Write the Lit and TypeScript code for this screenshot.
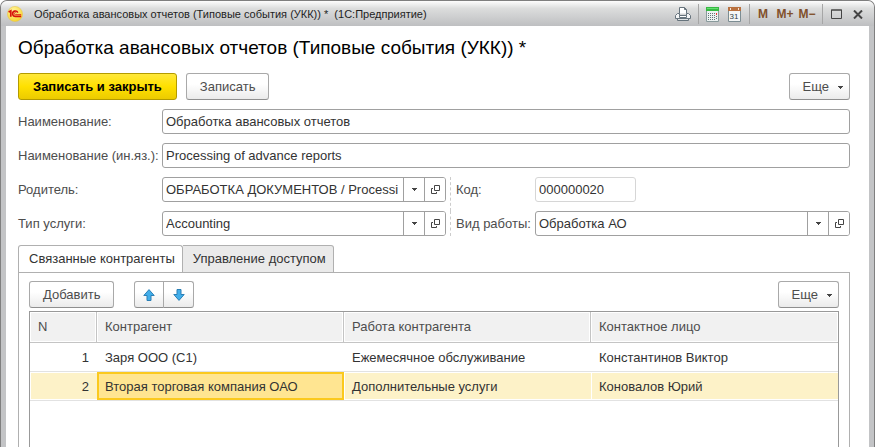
import { LitElement, html, svg, css } from "lit";
import { customElement, property, state } from "lit/decorators.js";
import { classMap } from "lit/directives/class-map.js";

const controls = css`
  * {
    box-sizing: border-box;
  }
  button,
  input {
    font: inherit;
    color: inherit;
    margin: 0;
  }
  .btn {
    display: inline-flex;
    align-items: center;
    justify-content: center;
    height: 27px;
    padding: 0 13px;
    border: 1px solid #a9a9a9;
    border-bottom-color: #8f8f8f;
    border-radius: 3px;
    background: linear-gradient(#ffffff 40%, #ebebeb);
    color: #4d4d4d;
    white-space: nowrap;
  }
`;

@customElement("choice-field")
class ChoiceField extends LitElement {
  @property() label = "";
  @property() value = "";

  static styles = [
    controls,
    css`
      :host {
        display: block;
        min-width: 0;
      }
      .box {
        display: flex;
        height: 25px;
        border: 1px solid #a0a0a0;
        border-radius: 3px;
        background: #fff;
        overflow: hidden;
      }
      .text {
        flex: 1;
        min-width: 0;
        padding: 0;
        margin: 0 2px 0 3px;
        border: 0;
        outline: 0;
        background: none;
        color: #333;
      }
      .pick {
        display: flex;
        align-items: center;
        justify-content: center;
        width: 21px;
        padding: 0;
        border: 0;
        border-left: 1px solid #a0a0a0;
        background: #fff;
      }
    `,
  ];

  render() {
    return html`<div class="box">
      <input class="text" aria-label=${this.label} .value=${this.value} />
      <button class="pick" aria-label="Выбрать из списка">
        <svg width="5" height="3" viewBox="0 0 5 3"><path d="M0 0h5v1H4v1H3v1H2V2H1V1H0z" fill="#444" /></svg>
      </button>
      <button class="pick" aria-label="Открыть">
        <svg width="9" height="9" viewBox="0 0 9 9" fill="none" stroke="#444">
          <path d="M3.5 .5h5v5h-5zM2 3.5H.5v5h5V7" />
        </svg>
      </button>
    </div>`;
  }
}

interface Row {
  n: number;
  party: string;
  work: string;
  contact: string;
}

const rows: Row[] = [
  { n: 1, party: "Заря ООО (С1)", work: "Ежемесячное обслуживание", contact: "Константинов Виктор" },
  { n: 2, party: "Вторая торговая компания ОАО", work: "Дополнительные услуги", contact: "Коновалов Юрий" },
];

const caret = svg`<svg class="caret" width="5" height="3" viewBox="0 0 5 3"><path d="M0 0h5v1H4v1H3v1H2V2H1V1H0z" fill="#444" /></svg>`;

const moveArrow = (down: boolean) => html`<svg width="12" height="12" viewBox="0 0 12 12">
  <path
    d=${down ? "M4 .5h4v5h3.2L6 11.4.8 5.5H4z" : "M4 11.5h4v-5h3.2L6 .6.8 6.5H4z"}
    fill="#42aeea"
    stroke="#2b7fb5"
    stroke-linejoin="round"
  />
</svg>`;

@customElement("app-root")
class AppRoot extends LitElement {
  @state() private tab = 0;
  @state() private selected = 2;

  static styles = [
    controls,
    css`
      :host {
        display: block;
        font: 13px/16px "Liberation Sans", Arial, sans-serif;
        color: #333;
      }
      .window {
        display: flex;
        flex-direction: column;
        min-height: 100vh;
        padding: 0 5px;
        border: 1px solid #7f7f7f;
        border-bottom: 0;
        border-radius: 7px 7px 0 0;
        background: #c3c4c6;
      }
      .titlebar {
        display: flex;
        align-items: center;
        height: 25px;
        margin: 0 -5px;
        padding: 1px 1px 0 6px;
        border-radius: 6px 6px 0 0;
        background: linear-gradient(#fdfdfd, #dcdddd 30%, #bebfc1);
        font-size: 11px;
        color: #1e1e1e;
      }
      .logo {
        flex: none;
        margin-right: 11px;
      }
      .caption {
        flex: 1;
        min-width: 0;
        overflow: hidden;
        white-space: pre;
      }
      .tools {
        display: flex;
        align-items: center;
        height: 20px;
      }
      .tool {
        display: flex;
        align-items: center;
        justify-content: center;
        width: 22px;
        height: 20px;
        padding: 0;
        border: 0;
        background: none;
        font-weight: bold;
        font-size: 12px;
        color: #81502b;
      }
      .day {
        font-weight: normal;
        font-size: 8px;
      }
      .group {
        display: flex;
        padding: 0 4px 0 2px;
        border-left: 1px solid #a6a6a6;
      }
      .group:first-child {
        border-left: 0;
      }
      .form {
        display: flex;
        flex-direction: column;
        flex: 1;
        padding: 12px 19px 0 12px;
        background: #fff;
      }
      .title {
        margin: 0;
        font-size: 19px;
        line-height: 20px;
        font-weight: normal;
        color: #000;
      }
      .commands {
        display: flex;
        gap: 9px;
        margin: 15px 0 9px;
      }
      .primary {
        padding: 0 14px;
        border-color: #b39b00;
        background: linear-gradient(#ffe83a, #ffe000 50%, #eccb00);
        font-weight: bold;
        color: #000;
      }
      .more {
        margin-left: auto;
        padding: 0 6px 0 13px;
      }
      .caret {
        margin: 2px 0 0 9px;
      }
      .fields {
        display: grid;
        grid-template-columns: 144px minmax(0, 284fr) 89px minmax(0, 315fr);
        row-gap: 9px;
        align-items: center;
      }
      .label {
        color: #4d4d4d;
        white-space: nowrap;
      }
      .side {
        align-self: stretch;
        display: flex;
        align-items: center;
        margin: 0 0 -9px 4px;
        padding: 0 0 9px 5px;
        border-left: 1px dashed #ccc;
      }
      .last {
        margin-bottom: 0;
        padding-bottom: 0;
      }
      .input {
        width: 100%;
        height: 25px;
        padding: 0 3px;
        border: 1px solid #a0a0a0;
        border-radius: 3px;
        background: #fff;
        color: #333;
      }
      .wide {
        grid-column: 2 / -1;
      }
      .code {
        width: 101px;
        border-color: #d6d6d6;
      }
      .tabs {
        display: flex;
        margin: 9px 0 -1px;
      }
      .tab {
        height: 28px;
        padding: 0 7px 0 10px;
        border: 1px solid #b0b0b0;
        border-left-width: 0;
        border-radius: 0 3px 0 0;
        background: #eaeaea;
        color: #333;
      }
      .tab:first-child {
        border-left-width: 1px;
        border-radius: 3px 3px 0 0;
      }
      .active {
        border-bottom-color: #fff;
        background: #fff;
      }
      .panel {
        display: flex;
        flex-direction: column;
        flex: 1;
        padding: 8px 10px 0;
        border: 1px solid #b0b0b0;
        border-bottom: 0;
      }
      .bar {
        display: flex;
        margin-bottom: 3px;
      }
      .movers {
        display: flex;
        margin-left: 20px;
      }
      .mover {
        width: 30px;
        padding: 0;
      }
      .mover:first-child {
        border-radius: 3px 0 0 3px;
      }
      .mover:last-child {
        width: 31px;
        margin-left: -1px;
        border-radius: 0 3px 3px 0;
      }
      .grid {
        flex: 1;
        border: 1px solid #999;
        border-bottom: 0;
      }
      .table {
        width: 100%;
        table-layout: fixed;
        border-collapse: separate;
        border-spacing: 0;
      }
      .number {
        width: 67px;
      }
      .head,
      .cell {
        padding: 0 8px;
        text-align: left;
        font-weight: normal;
        white-space: nowrap;
        overflow: hidden;
      }
      .head {
        height: 31px;
        border-bottom: 1px solid #c4c4c4;
        border-right: 1px solid #c4c4c4;
        background: #f1f1f1;
        box-shadow: inset 0 0 0 1px #fff;
        color: #4d4d4d;
      }
      .head:last-child {
        border-right: 0;
      }
      .cell {
        height: 29px;
        padding-top: 2px;
        border-bottom: 1px solid #e2e2e2;
      }
      .index {
        text-align: right;
      }
      .chosen .cell {
        background: #fdf2c8;
        box-shadow: inset 0 1px #fff, inset 0 -1px #fff, inset 1px 0 #fff;
      }
      .chosen .focus {
        background: #ffe591;
        box-shadow: inset 0 0 0 2px #fbc91e;
      }
    `,
  ];

  private titleBar() {
    return html`<header class="titlebar">
      <svg class="logo" width="16" height="16" viewBox="0 0 16 16">
        <defs>
          <radialGradient id="sun" cx=".4" cy=".3" r=".8">
            <stop offset="0" stop-color="#fff6a0" />
            <stop offset="1" stop-color="#f7cf22" />
          </radialGradient>
        </defs>
        <circle cx="8" cy="8" r="7.6" fill="url(#sun)" stroke="#e5c548" stroke-width=".5" />
        <path d="M1.6 6.1 3.8 4.9v5.9" fill="none" stroke="#d8130c" stroke-width="1.7" />
        <path d="M10.8 6.6a2.7 2.7 0 1 0-2.4 3.8h5.8" fill="none" stroke="#d8130c" stroke-width="1.6" />
        <path d="M9.2 7.2a1 1 0 1 0-.8 1.4h5.8" fill="none" stroke="#d8130c" stroke-width=".8" />
      </svg>
      <span class="caption">Обработка авансовых отчетов (Типовые события (УКК)) *  (1С:Предприятие)</span>
      <div class="tools">
        <div class="group">
          <button class="tool" aria-label="Печать">
            <svg width="16" height="14" viewBox="0 0 16 14" fill="#f4f5f6" stroke="#66737c">
              <path d="M4.5 6.5v-6h5l2 2v4" fill="#fff" />
              <path d="M9.5 .5v2h2" fill="none" />
              <path d="M2.5 6.5h2v2h7v-2h2l2 2v3h-15v-3z" />
              <path d="M4.5 8.5h7v2h-7z" fill="#fff" />
              <path d="M2.5 11.5h11v2h-11z" fill="#dfe3e5" />
            </svg>
          </button>
        </div>
        <div class="group">
          <button class="tool" aria-label="Калькулятор">
            <svg width="13" height="15" viewBox="0 0 13 15">
              <path d="M.5 .5h12v14H.5z" fill="#edf2f2" stroke="#899a9c" />
              <path d="M0 0h13v4H0z" fill="#36b942" />
              <path d="M1 1h11v1H1z" fill="#64e071" />
              <path d="M2 6.5h7M2 8.5h7M2 10.5h7M2 12.5h7" stroke="#627477" stroke-dasharray="1 1" />
              <path d="M10.5 6v2" stroke="#e33" />
              <path d="M10.5 9v4" stroke="#627477" stroke-dasharray="1 1" />
            </svg>
          </button>
          <button class="tool" aria-label="Календарь">
            <svg width="13" height="15" viewBox="0 0 13 15">
              <path d="M.5 1.5h12v13H.5z" fill="#f5f7f7" stroke="#7c8d93" />
              <path d="M0 0h13v4H0z" fill="#b9713f" />
              <path d="M2.5 1v2M10.5 1v2" stroke="#f6e4d6" />
              <text class="day" x="6" y="12" text-anchor="middle" fill="#2f4048">31</text>
            </svg>
          </button>
        </div>
        <div class="group">
          <button class="tool">M</button>
          <button class="tool">M+</button>
          <button class="tool">M−</button>
        </div>
        <div class="group">
          <button class="tool" aria-label="Развернуть">
            <svg width="11" height="10" viewBox="0 0 11 10"><path d="M.5 1h10v8.5H.5zM0 1h11" fill="none" stroke="#444" /></svg>
          </button>
          <button class="tool" aria-label="Закрыть">
            <svg width="10" height="9" viewBox="0 0 10 9"><path d="M1 .5l8 8M9 .5l-8 8" stroke="#444" stroke-width="2" /></svg>
          </button>
        </div>
      </div>
    </header>`;
  }

  private row(r: Row) {
    const chosen = r.n === this.selected;
    return html`<tr class=${classMap({ chosen })} @click=${() => (this.selected = r.n)}>
      <td class="cell index">${r.n}</td>
      <td class="cell focus">${r.party}</td>
      <td class="cell">${r.work}</td>
      <td class="cell">${r.contact}</td>
    </tr>`;
  }

  render() {
    const tabs = ["Связанные контрагенты", "Управление доступом"];
    return html`<div class="window">
      ${this.titleBar()}
      <main class="form">
        <h1 class="title">Обработка авансовых отчетов (Типовые события (УКК)) *</h1>
        <div class="commands">
          <button class="btn primary">Записать и закрыть</button>
          <button class="btn">Записать</button>
          <button class="btn more">Еще ${caret}</button>
        </div>
        <div class="fields">
          <label class="label" for="name">Наименование:</label>
          <input class="input wide" id="name" value="Обработка авансовых отчетов" />
          <label class="label" for="foreign">Наименование (ин.яз.):</label>
          <input class="input wide" id="foreign" value="Processing of advance reports" />
          <label class="label" for="parent">Родитель:</label>
          <choice-field id="parent" label="Родитель" value="ОБРАБОТКА ДОКУМЕНТОВ / Processi"></choice-field>
          <label class="label side" for="code">Код:</label>
          <input class="input code" id="code" value="000000020" readonly />
          <label class="label" for="service">Тип услуги:</label>
          <choice-field id="service" label="Тип услуги" value="Accounting"></choice-field>
          <label class="label side last" for="kind">Вид работы:</label>
          <choice-field id="kind" label="Вид работы" value="Обработка АО"></choice-field>
        </div>
        <div class="tabs" role="tablist">
          ${tabs.map(
            (t, i) => html`<button
              class=${classMap({ tab: true, active: i === this.tab })}
              role="tab"
              aria-selected=${i === this.tab}
              @click=${() => (this.tab = i)}
            >
              ${t}
            </button>`
          )}
        </div>
        <section class="panel">
          <div class="bar">
            <button class="btn">Добавить</button>
            <div class="movers">
              <button class="btn mover" aria-label="Переместить вверх">${moveArrow(false)}</button>
              <button class="btn mover" aria-label="Переместить вниз">${moveArrow(true)}</button>
            </div>
            <button class="btn more">Еще ${caret}</button>
          </div>
          <div class="grid">
            <table class="table">
              <thead>
                <tr>
                  <th class="head number">N</th>
                  <th class="head">Контрагент</th>
                  <th class="head">Работа контрагента</th>
                  <th class="head">Контактное лицо</th>
                </tr>
              </thead>
              <tbody>
                ${rows.map((r) => this.row(r))}
              </tbody>
            </table>
          </div>
        </section>
      </main>
    </div>`;
  }
}
